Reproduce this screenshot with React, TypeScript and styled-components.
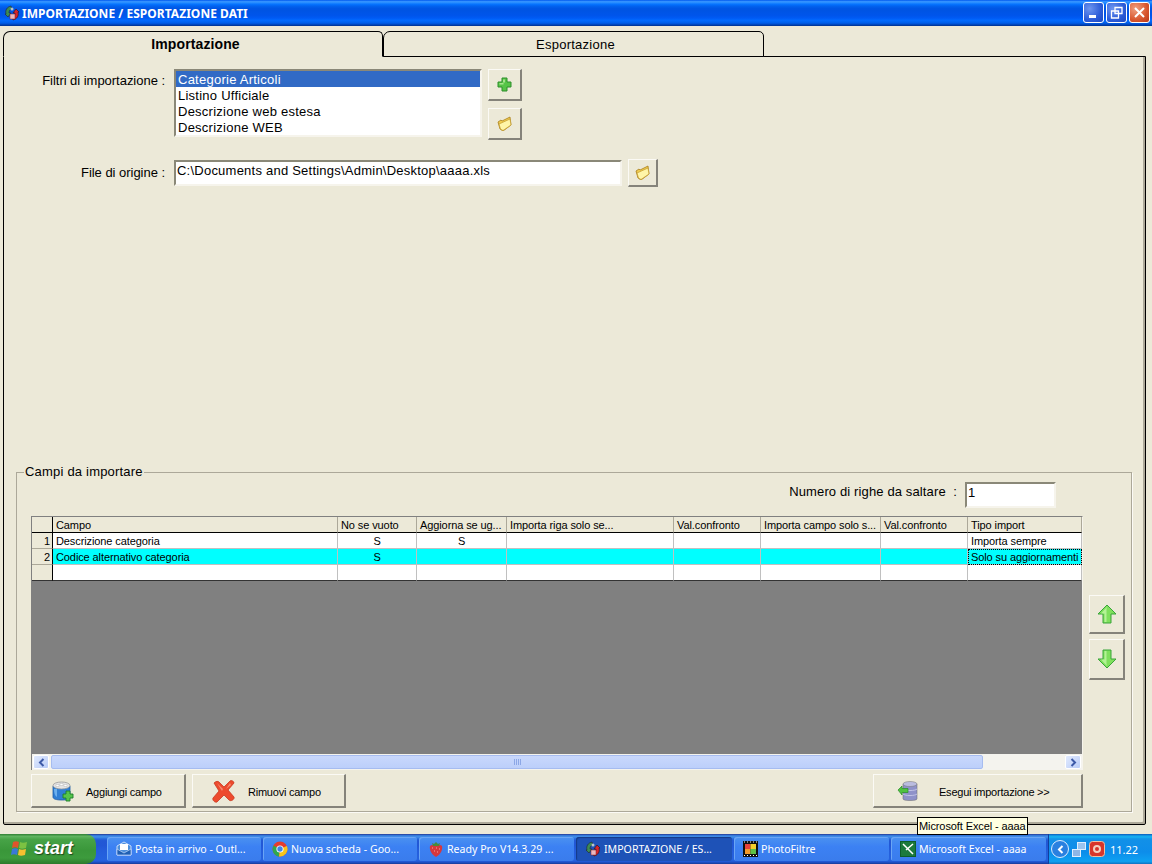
import React from "react";
import styled, { createGlobalStyle } from "styled-components";

const Global = createGlobalStyle`
  html, body { margin: 0; padding: 0; width: 1152px; height: 864px; overflow: hidden; background: #ece9d8; }
  * { box-sizing: border-box; }
  #root { width: 1152px; height: 864px; font-family: "Liberation Sans", Arial, sans-serif; color: #000; }
`;

const Screen = styled.div`
  position: relative;
  width: 1152px;
  height: 864px;
  display: flex;
  flex-direction: column;
  background: #ece9d8;
  overflow: hidden;
`;

const TitleBar = styled.header`
  height: 26px;
  flex: none;
  display: flex;
  align-items: center;
  padding: 0 2px 0 4px;
  background: linear-gradient(#0058ee 0, #3593ff 6%, #288eff 10%, #127dff 14%, #036ffc 18%, #0262ee 24%, #0057e5 32%, #0054e3 40%, #0055eb 60%, #005bf5 70%, #026afe 78%, #0062ef 86%, #0052d6 92%, #0040ab 96%, #003092 100%);
`;

const TitleText = styled.h1`
  margin: 0 0 0 2px;
  font: bold 12px "Noto Sans", sans-serif;
  letter-spacing: 0.03px;
  color: #fff;
  flex: 1;
  white-space: nowrap;
`;

const WinButtons = styled.div`
  display: flex;
  gap: 2px;
  margin-top: -1px;
`;

const WinButton = styled.div<{ $close?: boolean }>`
  width: 21px;
  height: 21px;
  border: 1px solid #fff;
  border-radius: 3px;
  display: flex;
  align-items: center;
  justify-content: center;
  background: ${(p) =>
    p.$close
      ? "radial-gradient(circle at 30% 30%, #f0a080, #d8562e 60%, #b8381a)"
      : "radial-gradient(circle at 30% 30%, #6d95ef, #2c5cd8 60%, #1c48c0)"};
`;

const Body = styled.main`
  flex: 1;
  min-height: 0;
  display: flex;
  flex-direction: column;
  padding: 5px 6px 9px 3px;
`;

const TabStrip = styled.div`
  display: flex;
  height: 26px;
  flex: none;
  margin-bottom: -1px;
  position: relative;
  z-index: 1;
`;

const Tab = styled.div<{ $active?: boolean }>`
  width: ${(p) => (p.$active ? 380 : 381)}px;
  height: 26px;
  display: flex;
  align-items: center;
  justify-content: center;
  padding-left: ${(p) => (p.$active ? 5 : 4)}px;
  background: #ece9d8;
  border: 1px solid #000;
  border-bottom: 1px solid ${(p) => (p.$active ? "#ece9d8" : "#000")};
  border-radius: 7px 5px 0 0;
  font-size: ${(p) => (p.$active ? 14 : 13)}px;
  font-weight: ${(p) => (p.$active ? "bold" : "normal")};
  letter-spacing: ${(p) => (p.$active ? "0.12px" : "0.25px")};
`;

const Panel = styled.section`
  flex: 1;
  min-height: 0;
  display: flex;
  flex-direction: column;
  border: 1px solid #000;
  border-radius: 0 0 2px 2px;
  box-shadow: inset -2px -2px 0 #aca899;
  padding: 12px 13px 12px 12px;
`;

const FilterRow = styled.div`
  display: flex;
  align-items: flex-start;
  height: 71px;
  margin-left: -12px;
`;

const FileRow = styled.div`
  display: flex;
  align-items: flex-start;
  margin: 19px 0 0 -12px;
`;

const FieldLabel = styled.label<{ $top: number }>`
  width: 161px;
  margin-right: 9px;
  text-align: right;
  font-size: 13px;
  letter-spacing: -0.03px;
  padding-top: ${(p) => p.$top}px;
  white-space: nowrap;
`;

const ListBox = styled.ul`
  list-style: none;
  margin: 0;
  padding: 0;
  width: 308px;
  height: 68px;
  background: #fff;
  border: 2px solid;
  border-color: #8a8878 #f6f4ec #f6f4ec #8a8878;
`;

const ListItem = styled.li<{ $selected?: boolean }>`
  height: 16px;
  line-height: 18px;
  padding-left: 2px;
  font-size: 13px;
  letter-spacing: 0.25px;
  overflow: hidden;
  white-space: nowrap;
  background: ${(p) => (p.$selected ? "#316ac5" : "transparent")};
  color: ${(p) => (p.$selected ? "#fff" : "#000")};
`;

const ToolColumn = styled.div`
  display: flex;
  flex-direction: column;
  gap: 7px;
  margin-left: 6px;
`;

const RaisedButton = styled.button<{ $w: number; $h: number }>`
  width: ${(p) => p.$w}px;
  height: ${(p) => p.$h}px;
  padding: 0;
  flex: none;
  display: flex;
  align-items: center;
  justify-content: center;
  background: #ece9d8;
  color: #000;
  font-family: inherit;
  font-size: 11px;
  letter-spacing: -0.23px;
  border: 1px solid;
  border-color: #fbfaf5 #85837a #85837a #fbfaf5;
  border-bottom-width: 2px;
  border-right-width: 2px;
`;

const ButtonLabel = styled.span`
  padding-top: 2px;
  white-space: nowrap;
`;

const PathInput = styled.div`
  width: 448px;
  height: 26px;
  margin-top: 1px;
  padding: 1px 0 0 1px;
  background: #fff;
  font-size: 13px;
  letter-spacing: 0.23px;
  line-height: 16px;
  border: 2px solid;
  border-color: #8a8878 #f6f4ec #f6f4ec #8a8878;
  white-space: nowrap;
`;

const Spacer = styled.div`
  flex: 1;
  min-height: 0;
`;

const Group = styled.fieldset`
  flex: none;
  margin: 0;
  min-width: 0;
  padding: 2px 6px 3px 14px;
  border: 1px solid #aca899;
  box-shadow: 1px 1px 0 #fbfaf5;
  display: flex;
`;

const GroupTitle = styled.legend`
  margin-left: -7px;
  padding: 0 1px;
  font-size: 13px;
  line-height: 16px;
  letter-spacing: 0.2px;
`;

const GroupInner = styled.div`
  display: flex;
  gap: 6px;
`;

const MainColumn = styled.div`
  width: 1052px;
  display: flex;
  flex-direction: column;
`;

const SkipRow = styled.div`
  display: flex;
  justify-content: flex-end;
  align-items: flex-start;
  height: 26px;
  margin-bottom: 8px;
  padding-right: 27px;
  font-size: 13px;
  line-height: 20px;
  letter-spacing: 0.13px;
`;

const SkipInput = styled.div`
  width: 91px;
  height: 26px;
  margin-left: 8px;
  padding: 0 0 0 1px;
  background: #fff;
  line-height: 18px;
  font-size: 13px;
  border: 2px solid;
  border-color: #8a8878 #f6f4ec #f6f4ec #8a8878;
`;

const GridFrame = styled.div`
  height: 254px;
  display: flex;
  flex-direction: column;
  border-top: 1px solid #808080;
  border-left: 1px solid #808080;
  border-right: 1px solid #f6f4ec;
  background: #808080;
`;

const GridTable = styled.div`
  display: grid;
  grid-template-columns: 21px 285px 79px 90px 167px 87px 120px 87px 114px;
  grid-auto-rows: 16px;
  flex: none;
`;

const HeadCell = styled.div<{ $corner?: boolean }>`
  height: 16px;
  padding-left: 3px;
  font-size: 11px;
  letter-spacing: -0.1px;
  line-height: 17px;
  background: #ece9d8;
  border-bottom: 1px solid #000;
  border-right: 1px solid ${(p) => (p.$corner ? "#000" : "#aca899")};
  white-space: nowrap;
  overflow: hidden;
`;

const RowHead = styled.div<{ $last?: boolean }>`
  height: 16px;
  padding-right: 2px;
  text-align: right;
  font-size: 11px;
  line-height: 17px;
  background: #ece9d8;
  border-right: 1px solid #000;
  border-bottom: 1px solid ${(p) => (p.$last ? "#333" : "#aca899")};
`;

const Cell = styled.div<{ $cyan?: boolean; $center?: boolean; $focus?: boolean; $last?: boolean }>`
  height: 16px;
  padding: 0 ${(p) => (p.$center ? 0 : 3)}px;
  font-size: 11px;
  letter-spacing: -0.1px;
  line-height: 17px;
  text-align: ${(p) => (p.$center ? "center" : "left")};
  background: ${(p) => (p.$cyan ? "#00ffff" : "#fff")};
  border-right: 1px solid #c0c0c0;
  border-bottom: 1px solid ${(p) => (p.$last ? "#333" : "#c0c0c0")};
  white-space: nowrap;
  overflow: hidden;
  outline: ${(p) => (p.$focus ? "1px dotted #000" : "none")};
  outline-offset: -1px;
`;

const GridVoid = styled.div`
  flex: 1;
  min-height: 0;
`;

const ScrollBar = styled.div`
  height: 16px;
  flex: none;
  display: flex;
  align-items: stretch;
  padding: 1px;
  background: #f4f3ee;
`;

const ScrollArrow = styled.div`
  width: 16px;
  flex: none;
  display: flex;
  align-items: center;
  justify-content: center;
  background: linear-gradient(135deg, #e1eafe, #b9ccf8);
  border: 1px solid #fff;
  border-radius: 2px;
`;

const ScrollThumb = styled.div`
  width: 932px;
  margin-left: 2px;
  flex: none;
  display: flex;
  align-items: center;
  justify-content: center;
  gap: 1px;
  background: linear-gradient(#c9d8fc, #bccffa);
  border: 1px solid #a6bcf0;
  border-radius: 2px;
`;

const GripLine = styled.span`
  width: 1px;
  height: 6px;
  background: #8ca7e6;
`;

const ScrollTrack = styled.div`
  flex: 1;
`;

const ActionRow = styled.div`
  display: flex;
  gap: 6px;
  margin-top: 4px;
`;

const ActionButton = styled(RaisedButton)<{ $pad: number; $gap: number }>`
  justify-content: flex-start;
  padding-left: ${(p) => p.$pad}px;
  gap: ${(p) => p.$gap}px;
`;

const ActionGap = styled.div`
  flex: 1;
`;

const ArrowColumn = styled.div`
  display: flex;
  flex-direction: column;
  gap: 5px;
  padding-top: 113px;
`;

const TaskBar = styled.footer`
  height: 30px;
  flex: none;
  display: flex;
  align-items: stretch;
  background: linear-gradient(#1f2f86 0, #3165c4 3%, #3682e5 6%, #4490e6 10%, #3883e5 12%, #2b71e0 15%, #2663da 18%, #235bd6 20%, #2258d5 23%, #2157d6 38%, #245ddb 54%, #2562df 86%, #245fdc 89%, #2158d4 92%, #1d4ec0 95%, #1941a5 98%);
`;

const StartButton = styled.div`
  width: 96px;
  flex: none;
  display: flex;
  align-items: center;
  gap: 4px;
  padding: 0 0 1px 10px;
  margin-right: 11px;
  border-radius: 0 10px 10px 0;
  background: linear-gradient(#2f7f33 0, #5fb45f 8%, #47a347 18%, #3a973a 55%, #3d9b3d 80%, #2c7a2c 100%);
  color: #fff;
  font: italic bold 18px "Liberation Sans", sans-serif;
  text-shadow: 1px 1px 1px #1c4a1c;
`;

const TaskList = styled.div`
  flex: 1;
  display: flex;
  align-items: center;
`;

const TaskItem = styled.div<{ $w: number; $gap: number; $active?: boolean }>`
  width: ${(p) => p.$w}px;
  margin-right: ${(p) => p.$gap}px;
  height: 24px;
  flex: none;
  display: flex;
  align-items: center;
  gap: 3px;
  padding: 0 0 1px 9px;
  border-radius: 3px;
  color: #fff;
  font: 10.6px "Noto Sans", sans-serif;
  white-space: nowrap;
  overflow: hidden;
  background: ${(p) => (p.$active ? "#1e52b7" : "linear-gradient(#4b92f0, #3c81f3 40%, #3a7cec)")};
  box-shadow: ${(p) => (p.$active ? "inset 1px 1px 1px #153a88" : "inset 1px 1px 0 #6aa5f5")};
`;

const Tray = styled.div`
  width: 105px;
  flex: none;
  display: flex;
  align-items: center;
  padding-left: 2px;
  border-left: 1px solid #0f3f9e;
  background: linear-gradient(#0c59b9 0, #139ee9 6%, #18b5f2 10%, #139beb 14%, #1290e8 20%, #0d8dea 60%, #0d9ff1 88%, #0f9eed 92%, #1171c0 100%);
`;

const TrayChevron = styled.div`
  width: 18px;
  height: 18px;
  margin-right: 2px;
  border-radius: 50%;
  border: 1px solid #dcecff;
  background: #2a80e0;
  display: flex;
  align-items: center;
  justify-content: center;
`;

const TrayIcons = styled.div`
  display: flex;
  align-items: center;
  gap: 2px;
`;

const Clock = styled.span`
  margin-left: 5px;
  color: #fff;
  font: 11px "Noto Sans", sans-serif;
`;

const Tip = styled.div`
  position: absolute;
  left: 917px;
  top: 817px;
  width: 111px;
  height: 18px;
  padding-left: 1px;
  background: #ffffe1;
  border: 1px solid #000;
  font-size: 11px;
  letter-spacing: -0.1px;
  line-height: 16px;
  white-space: nowrap;
`;

/* ---------- drawings ---------- */
const AppIcon = ({ s = 16 }: { s?: number }) => (
  <svg width={s} height={s} viewBox="0 0 16 16">
    <path d="M2 9C1 5 3 2 7 1l1 3C6 4 5 6 5 8l2 0-3 4-3-3z" fill="#3d8b55" stroke="#223" strokeWidth=".6" />
    <path d="M14 7c1 4-1 7-5 8l-1-3c2 0 3-2 3-4H9l3-4 3 3z" fill="#d6242c" stroke="#311" strokeWidth=".6" />
    <rect x="6" y="9" width="5" height="5" fill="#e8b8c0" stroke="#822" strokeWidth=".5" />
    <circle cx="8" cy="4" r="1.5" fill="#b9c4cc" />
  </svg>
);
const PlusIcon = () => (
  <svg width="15" height="15" viewBox="0 0 15 15">
    <path d="M5 1h5v4h4v5h-4v4H5v-4H1V5h4z" fill="#56c447" stroke="#2d8e2a" strokeWidth="1" strokeLinejoin="round" />
    <path d="M6 2.500h2v3H6zM2.500 6h4v1.500h-4z" fill="#a6e58c" />
  </svg>
);
const FolderIcon = () => (
  <svg width="15" height="15" viewBox="0 0 15 15">
    <path d="M1 6l3-2 1 1 8-4 1 8-8 6-3-2z" fill="#f0cc50" stroke="#a87d1c" strokeWidth=".8" strokeLinejoin="round" />
    <path d="M2 8l11-5 1 6-8 5.500-2.500-1.500z" fill="#fff5a8" stroke="#c29a2c" strokeWidth=".7" strokeLinejoin="round" />
  </svg>
);
const BucketIcon = () => (
  <svg width="24" height="24" viewBox="0 0 24 24">
    <path d="M2 7h17v11c0 2-2 3-8 3-6 0-9-1-9-3z" fill="#2f7fd4" stroke="#1d5aa5" strokeWidth=".8" />
    <ellipse cx="10.500" cy="6.500" rx="8.500" ry="3.500" fill="#e4e4e4" stroke="#999" strokeWidth=".8" />
    <path d="M5 5.500h3v2H5zM9 4.500h3v2H9zM13 5.500h3v2h-3z" fill="#fff" stroke="#aaa" strokeWidth=".4" />
    <path d="M3 10c0 4 1 7 3 8V10z" fill="#6cb0ee" />
    <path d="M15 12h4v3h3v4h-3v3h-4v-3h-3v-4h3z" fill="#55c54a" stroke="#1e7d2a" strokeWidth=".9" />
  </svg>
);
const CrossIcon = () => (
  <svg width="24" height="24" viewBox="0 0 24 24">
    <path d="M2 4c2-2 4-2 5-1l5 5 6-6c1-1 4 0 4 2l-6 7 6 7c1 2-3 5-5 3l-5-5-7 7c-2 1-5-2-4-4l6-7z" fill="#ed4b2e" stroke="#c9381f" strokeWidth=".8" />
    <path d="M5 4l6 6-1 2zM18 4l-4 6 5-4z" fill="#f78a70" />
  </svg>
);
const DbIcon = () => (
  <svg width="22" height="22" viewBox="0 0 22 22">
    <path d="M6 4v15c0 2 14 2 14 0V4z" fill="#8f92c9" stroke="#666" strokeWidth=".5" />
    <ellipse cx="13" cy="4" rx="7" ry="2.500" fill="#babcdf" stroke="#777" strokeWidth=".5" />
    <path d="M6 9c2 2 12 2 14 0M6 14c2 2 12 2 14 0" stroke="#c1c3e6" fill="none" />
    <path d="M1 10l4-4v2.500h6v4H5V15z" fill="#4fc23f" stroke="#2a8a2d" strokeWidth=".7" />
  </svg>
);
const ArrowIcon = ({ down }: { down?: boolean }) => (
  <svg width="20" height="20" viewBox="0 0 20 20" style={down ? { transform: "scaleY(-1)" } : undefined}>
    <path d="M10 1l9 9h-5v9H6v-9H1z" fill="#7fe05c" stroke="#3aa53a" strokeWidth="1" strokeLinejoin="round" />
    <path d="M10 3L4 9.500h3.500V18h2V5z" fill="#b4f296" />
  </svg>
);
const ChevronIcon = ({ right, c = "#3d5aa8" }: { right?: boolean; c?: string }) => (
  <svg width="9" height="9" viewBox="0 0 9 9">
    <path d={right ? "M2.500 1l3.500 3.500-3.500 3.500" : "M6.500 1L3 4.500l3.500 3.500"} fill="none" stroke={c} strokeWidth="2" />
  </svg>
);
const XpFlag = () => (
  <svg width="20" height="19" viewBox="0 0 20 19">
    <path d="M3 3c2-1 4-1 6 0l-1 6c-2-1-4-1-6 0z" fill="#e0532c" />
    <path d="M10 3c2 1 4 1 7 0l-1 6c-3 1-5 1-7 0z" fill="#7cc242" />
    <path d="M2 10c2-1 4-1 6 0l-1 6c-2-1-4-1-6 0z" fill="#3b78d8" />
    <path d="M9 10c2 1 4 1 7 0l-1 6c-3 1-5 1-7 0z" fill="#f5c030" />
  </svg>
);
const MailIcon = () => (
  <svg width="16" height="16" viewBox="0 0 16 16">
    <path d="M1 5l7-4 7 4v9H1z" fill="#4c8fdc" stroke="#e8f0ff" strokeWidth=".8" />
    <path d="M4 3h8v6H4z" fill="#fff" />
    <path d="M1 8l7 4 7-4v6H1z" fill="#1f5fb4" stroke="#dbe8ff" strokeWidth=".6" />
  </svg>
);
const ChromeIcon = () => (
  <svg width="16" height="16" viewBox="0 0 16 16">
    <circle cx="8" cy="8" r="7.500" fill="#e53c2e" />
    <path d="M8 8L1.500 4.500A7.500 7.500 0 0 0 7 15.500z" fill="#2fa84f" />
    <path d="M8 8l6.800-3A7.500 7.500 0 0 1 7 15.500z" fill="#f6c51d" />
    <circle cx="8" cy="8" r="3.600" fill="#fff" />
    <circle cx="8" cy="8" r="2.700" fill="#3f85e8" />
  </svg>
);
const BerryIcon = () => (
  <svg width="16" height="17" viewBox="0 0 16 17">
    <path d="M2 6c2-2 10-2 12 0 1 4-2 9-6 11C4 15 1 10 2 6z" fill="#d8373c" />
    <path d="M4 3l2 1 2-2 2 2 2-1-1 3H5z" fill="#4a8a3a" />
    <path d="M4 8h1M8 8h1M11 9h1M6 11h1M9 12h1" stroke="#f4a6a0" />
  </svg>
);
const PhotoIcon = () => (
  <svg width="15" height="16" viewBox="0 0 15 16">
    <rect width="15" height="16" fill="#111" />
    <rect x="2" y="3" width="5.500" height="5" fill="#e8423a" />
    <rect x="7.500" y="3" width="5.500" height="5" fill="#f3cf2c" />
    <rect x="2" y="8" width="5.500" height="5" fill="#f29a2c" />
    <rect x="7.500" y="8" width="5.500" height="5" fill="#5dc248" />
    <path d="M1 1h1M4 1h1M7 1h1M10 1h1M13 1h1M1 14.500h1M4 14.500h1M7 14.500h1M10 14.500h1M13 14.500h1" stroke="#fff" />
  </svg>
);
const ExcelIcon = () => (
  <svg width="16" height="16" viewBox="0 0 16 16">
    <rect x=".5" y=".5" width="15" height="15" fill="#e8f4e8" stroke="#0d5e2a" />
    <rect x="1" y="1" width="14" height="14" fill="#1c7a3c" />
    <path d="M3 3l10 10M13 3L6 9" stroke="#fff" strokeWidth="1.500" />
  </svg>
);
const NetIcon = () => (
  <svg width="16" height="17" viewBox="0 0 16 17">
    <rect x="6.500" y="1.500" width="8" height="7" fill="#9cc4ee" stroke="#dfefff" />
    <rect x="1.500" y="8.500" width="8" height="7" fill="#8db6e6" stroke="#dfefff" />
  </svg>
);
const RecIcon = () => (
  <svg width="16" height="16" viewBox="0 0 16 16">
    <rect x=".5" y=".5" width="15" height="15" rx="3" fill="#d8352a" stroke="#f2c0a0" />
    <circle cx="8" cy="8" r="4" fill="#f4d0c0" />
    <circle cx="8" cy="8" r="2" fill="#d8352a" />
  </svg>
);

const headers = ["Campo", "No se vuoto", "Aggiorna se ug...", "Importa riga solo se...", "Val.confronto", "Importa campo solo s...", "Val.confronto", "Tipo import"];

export default function App() {
  return (
    <Screen>
      <Global />
      <TitleBar>
        <AppIcon />
        <TitleText>IMPORTAZIONE / ESPORTAZIONE DATI</TitleText>
        <WinButtons>
          <WinButton>
            <svg width="13" height="13" viewBox="0 0 13 13"><rect x="2" y="9" width="7" height="3" fill="#fff" /></svg>
          </WinButton>
          <WinButton>
            <svg width="13" height="13" viewBox="0 0 13 13"><path d="M5 1.500h7v6H5zM1.500 5h7v7h-7z" fill="none" stroke="#fff" strokeWidth="1.300" /></svg>
          </WinButton>
          <WinButton $close>
            <svg width="13" height="13" viewBox="0 0 13 13"><path d="M2 2l9 9M11 2l-9 9" stroke="#fff" strokeWidth="2" /></svg>
          </WinButton>
        </WinButtons>
      </TitleBar>
      <Body>
        <TabStrip>
          <Tab $active>Importazione</Tab>
          <Tab>Esportazione</Tab>
        </TabStrip>
        <Panel>
          <FilterRow>
            <FieldLabel $top={4}>Filtri di importazione :</FieldLabel>
            <ListBox>
              <ListItem $selected>Categorie Articoli</ListItem>
              <ListItem>Listino Ufficiale</ListItem>
              <ListItem>Descrizione web estesa</ListItem>
              <ListItem>Descrizione WEB</ListItem>
            </ListBox>
            <ToolColumn>
              <RaisedButton $w={34} $h={32}><PlusIcon /></RaisedButton>
              <RaisedButton $w={34} $h={32}><FolderIcon /></RaisedButton>
            </ToolColumn>
          </FilterRow>
          <FileRow>
            <FieldLabel $top={6}>File di origine :</FieldLabel>
            <PathInput>C:\Documents and Settings\Admin\Desktop\aaaa.xls</PathInput>
            <ToolColumn>
              <RaisedButton $w={30} $h={28}><FolderIcon /></RaisedButton>
            </ToolColumn>
          </FileRow>
          <Spacer />
          <Group>
            <GroupTitle>Campi da importare</GroupTitle>
            <GroupInner>
              <MainColumn>
                <SkipRow>
                  Numero di righe da saltare&nbsp; :
                  <SkipInput>1</SkipInput>
                </SkipRow>
                <GridFrame>
                  <GridTable>
                    <HeadCell $corner />
                    {headers.map((h, i) => (
                      <HeadCell key={i}>{h}</HeadCell>
                    ))}
                    <RowHead>1</RowHead>
                    <Cell>Descrizione categoria</Cell>
                    <Cell $center>S</Cell>
                    <Cell $center>S</Cell>
                    <Cell /><Cell /><Cell /><Cell />
                    <Cell>Importa sempre</Cell>
                    <RowHead>2</RowHead>
                    <Cell $cyan>Codice alternativo categoria</Cell>
                    <Cell $cyan $center>S</Cell>
                    <Cell $cyan /><Cell $cyan /><Cell $cyan /><Cell $cyan /><Cell $cyan />
                    <Cell $cyan $focus>Solo su aggiornamenti</Cell>
                    <RowHead $last />
                    <Cell $last /><Cell $last /><Cell $last /><Cell $last /><Cell $last /><Cell $last /><Cell $last /><Cell $last />
                  </GridTable>
                  <GridVoid />
                  <ScrollBar>
                    <ScrollArrow><ChevronIcon /></ScrollArrow>
                    <ScrollThumb>
                      <GripLine /><GripLine /><GripLine /><GripLine />
                    </ScrollThumb>
                    <ScrollTrack />
                    <ScrollArrow><ChevronIcon right /></ScrollArrow>
                  </ScrollBar>
                </GridFrame>
                <ActionRow>
                  <ActionButton $w={155} $h={34} $pad={19} $gap={11}><BucketIcon /><ButtonLabel>Aggiungi campo</ButtonLabel></ActionButton>
                  <ActionButton $w={154} $h={34} $pad={19} $gap={12}><CrossIcon /><ButtonLabel>Rimuovi campo</ButtonLabel></ActionButton>
                  <ActionGap />
                  <ActionButton $w={210} $h={34} $pad={23} $gap={20}><DbIcon /><ButtonLabel>Esegui importazione &gt;&gt;</ButtonLabel></ActionButton>
                </ActionRow>
              </MainColumn>
              <ArrowColumn>
                <RaisedButton $w={36} $h={39}><ArrowIcon /></RaisedButton>
                <RaisedButton $w={36} $h={41}><ArrowIcon down /></RaisedButton>
              </ArrowColumn>
            </GroupInner>
          </Group>
        </Panel>
      </Body>
      <TaskBar>
        <StartButton><XpFlag />start</StartButton>
        <TaskList>
          <TaskItem $w={154} $gap={2}><MailIcon />Posta in arrivo - Outl...</TaskItem>
          <TaskItem $w={154} $gap={2}><ChromeIcon />Nuova scheda - Goo...</TaskItem>
          <TaskItem $w={155} $gap={2}><BerryIcon />Ready Pro V14.3.29 ...</TaskItem>
          <TaskItem $w={156} $gap={2} $active><AppIcon />IMPORTAZIONE / ES...</TaskItem>
          <TaskItem $w={155} $gap={2}><PhotoIcon />PhotoFiltre</TaskItem>
          <TaskItem $w={155} $gap={2}><ExcelIcon />Microsoft Excel - aaaa</TaskItem>
        </TaskList>
        <Tray>
          <TrayChevron><ChevronIcon c="#fff" /></TrayChevron>
          <TrayIcons>
            <NetIcon />
            <RecIcon />
          </TrayIcons>
          <Clock>11.22</Clock>
        </Tray>
      </TaskBar>
      <Tip>Microsoft Excel - aaaa</Tip>
    </Screen>
  );
}
